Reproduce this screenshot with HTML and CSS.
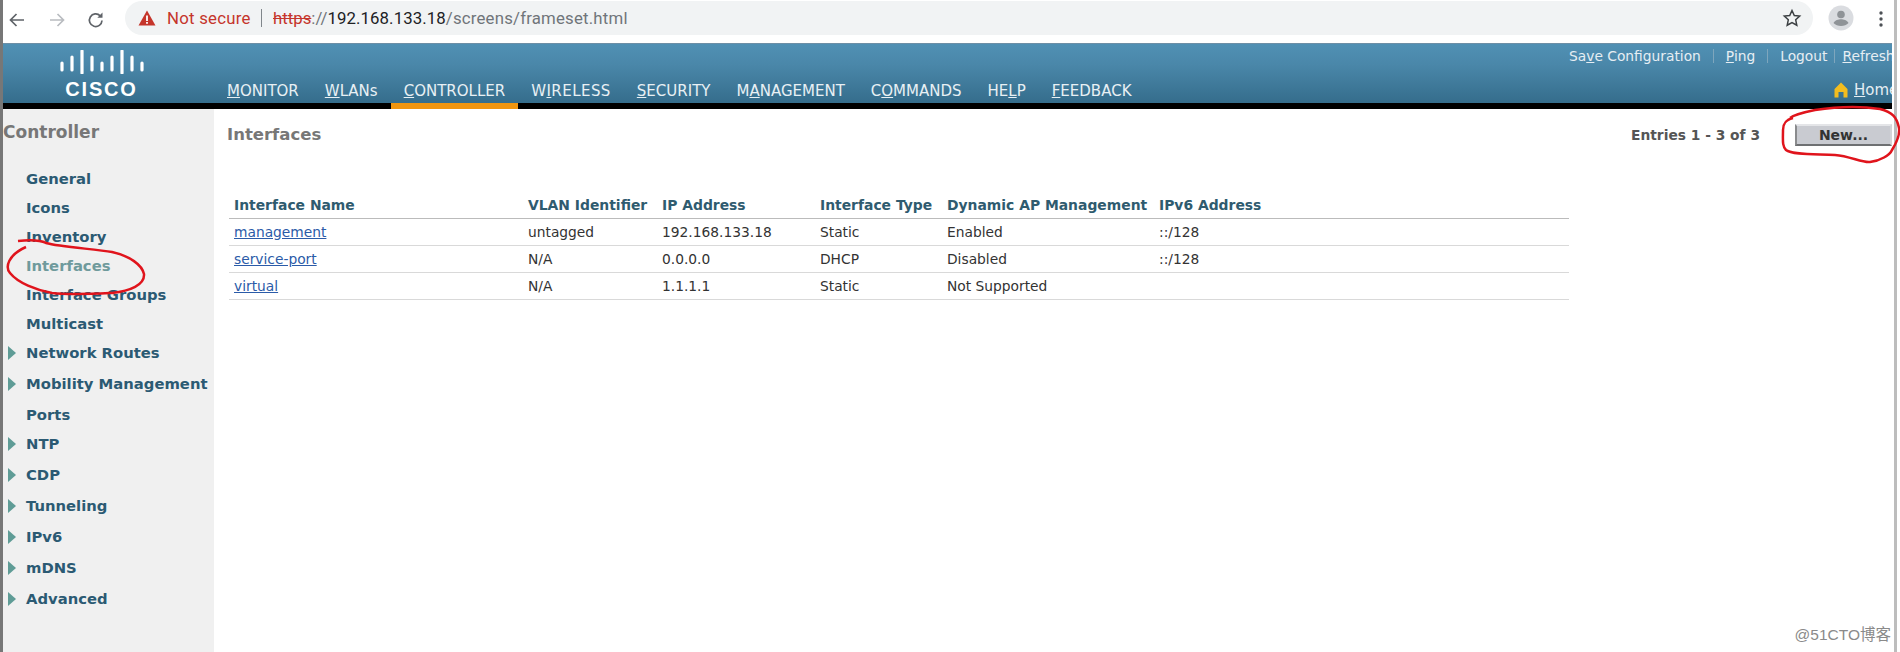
FILE: index.html
```html
<!DOCTYPE html>
<html lang="en">
<head>
<meta charset="utf-8">
<title>Interfaces</title>
<link rel="stylesheet" href="styles.css">
</head>
<body>
<div class="shell">
  <div class="chrome">
    <svg class="tool" width="20" height="20" viewBox="0 0 20 20"><path d="M17 10H3.500M9.500 4l-6 6 6 6" fill="none" stroke="#5f6368" stroke-width="1.700"/></svg>
    <svg class="tool" width="20" height="20" viewBox="0 0 20 20"><path d="M3 10h13.500M10.500 4l6 6-6 6" fill="none" stroke="#b9bcc0" stroke-width="1.700"/></svg>
    <svg class="tool" width="20" height="20" viewBox="0 0 20 20"><path d="M16 10.500a6.300 6.300 0 1 1-1.800-4.700" fill="none" stroke="#5f6368" stroke-width="1.700"/><path d="M16.500 2.500v5.200h-5.200z" fill="#5f6368"/></svg>
    <div class="omnibox">
      <svg class="warn" width="18" height="16" viewBox="0 0 18 16"><path d="M9 0.500 17.500 15.500H0.500z" fill="#c5352b"/><path d="M8.100 5.500h1.800v5.500H8.100zM8.100 12h1.800v1.800H8.100z" fill="#fff"/></svg>
      <span class="insecure">Not secure</span>
      <span class="sep"></span>
      <span class="url"><span class="scheme">https</span><span class="dim">://</span><span class="host">192.168.133.18</span><span class="dim path">/screens/frameset.html</span></span>
      <svg class="star" width="20" height="20" viewBox="0 0 20 20"><path d="M10 2.500l2.300 5 5.400.6-4 3.700 1.100 5.400-4.800-2.700-4.800 2.700 1.100-5.400-4-3.700 5.400-.6z" fill="none" stroke="#3c4043" stroke-width="1.500"/></svg>
    </div>
    <svg class="avatar" width="26" height="26" viewBox="0 0 26 26"><circle cx="13" cy="13" r="12.500" fill="#dadce0"/><circle cx="13" cy="9.500" r="3.800" fill="#8f9397"/><path d="M5.500 18c1.500-3 5-3.800 7.500-3.800s6 .8 7.500 3.800c-1.800 2-4.500 3-7.500 3s-5.700-1-7.500-3z" fill="#8f9397"/></svg>
    <svg class="dots" width="6" height="18" viewBox="0 0 6 18"><circle cx="3" cy="3" r="1.700" fill="#4d5156"/><circle cx="3" cy="9" r="1.700" fill="#4d5156"/><circle cx="3" cy="15" r="1.700" fill="#4d5156"/></svg>
  </div>

  <header class="top">
    <div class="brand">
      <svg class="bars" width="84" height="24" viewBox="0 0 84 24"><path d="M2 13v7M12 7v13M22 1v22M32 7v13M42 13v7M52 7v13M62 1v22M72 7v13M82 13v7" stroke="#fff" stroke-width="3.200" stroke-linecap="round" fill="none"/></svg>
      <span class="wordmark">CISCO</span>
    </div>
    <nav class="menu">
      <a class="tab"><u>M</u>ONITOR</a>
      <a class="tab"><u>W</u>LANs</a>
      <a class="tab tab-on"><u>C</u>ONTROLLER</a>
      <a class="tab tab-wide">W<u>I</u>RELESS</a>
      <a class="tab"><u>S</u>ECURITY</a>
      <a class="tab">M<u>A</u>NAGEMENT</a>
      <a class="tab">C<u>O</u>MMANDS</a>
      <a class="tab">HE<u>L</u>P</a>
      <a class="tab"><u>F</u>EEDBACK</a>
    </nav>
    <div class="util">
      <div class="util-row">
        <span>Sa<u>v</u>e Configuration</span><i class="pipe"></i>
        <span><u>P</u>ing</span><i class="pipe"></i>
        <span>Logout</span><i class="pipe pipe-tight"></i>
        <span><u>R</u>efresh</span>
      </div>
      <div class="home-row">
        <svg width="14" height="16" viewBox="0 0 14 16"><path d="M7 0.500 13.500 7V15.500H9.500V10H4.500V15.500H0.500V7z" fill="#f3bd1f"/></svg>
        <span><u>H</u>ome</span>
      </div>
    </div>
  </header>

  <div class="body">
    <aside class="side">
      <h2 class="side-title">Controller</h2>
      <ul class="side-list">
        <li class="side-item">General</li>
        <li class="side-item">Icons</li>
        <li class="side-item">Inventory</li>
        <li class="side-item side-current">Interfaces</li>
        <li class="side-item">Interface Groups</li>
        <li class="side-item">Multicast</li>
        <li class="side-item side-more side-tall">Network Routes</li>
        <li class="side-item side-more side-tall">Mobility Management</li>
        <li class="side-item">Ports</li>
        <li class="side-item side-more side-tall">NTP</li>
        <li class="side-item side-more side-tall">CDP</li>
        <li class="side-item side-more side-tall">Tunneling</li>
        <li class="side-item side-more side-tall">IPv6</li>
        <li class="side-item side-more side-tall">mDNS</li>
        <li class="side-item side-more side-tall">Advanced</li>
      </ul>
    </aside>
    <main class="main">
      <div class="main-head">
        <h1 class="main-title">Interfaces</h1>
        <span class="entries">Entries 1 - 3 of 3</span>
        <button class="new-btn">New...</button>
      </div>
      <table class="grid">
        <colgroup>
          <col class="c1"><col class="c2"><col class="c3"><col class="c4"><col class="c5"><col class="c6">
        </colgroup>
        <thead>
          <tr><th>Interface Name</th><th>VLAN Identifier</th><th>IP Address</th><th>Interface Type</th><th>Dynamic AP Management</th><th>IPv6 Address</th></tr>
        </thead>
        <tbody>
          <tr><td><a class="link">management</a></td><td>untagged</td><td>192.168.133.18</td><td>Static</td><td>Enabled</td><td>::/128</td></tr>
          <tr><td><a class="link">service-port</a></td><td>N/A</td><td>0.0.0.0</td><td>DHCP</td><td>Disabled</td><td>::/128</td></tr>
          <tr><td><a class="link">virtual</a></td><td>N/A</td><td>1.1.1.1</td><td>Static</td><td>Not Supported</td><td></td></tr>
        </tbody>
      </table>
    </main>
  </div>

  <div class="watermark">@51CTO博客</div>
  <svg class="ink" width="1900" height="652" viewBox="0 0 1900 652">
    <path d="M18 241C28 240 40 240 46 243C60 247 95 249 112 252C130 256 142 265 144 274C145 285 130 291 112 293C90 294 70 295 52 293C36 290 18 283 10 273C5 267 8 255 26 247" />
    <path d="M1793 118C1785 120 1783 124 1783 130C1783 140 1782 146 1786 150C1792 155 1815 154 1835 155C1850 156 1862 163 1870 162C1880 161 1890 155 1892 150C1897 142 1900 135 1899 128C1897 118 1893 112 1880 109C1860 106 1835 107 1815 110C1805 112 1795 114 1790 118" />
  </svg>
</div>
</body>
</html>
```

FILE: styles.css
```css
* { box-sizing: border-box; }
html, body { margin: 0; padding: 0; background: #fff; }
body { width: 1900px; height: 652px; overflow: hidden; font-family: "DejaVu Sans", sans-serif; }
u { text-decoration: underline; }
ul { list-style: none; margin: 0; padding: 0; }

.shell {
  position: relative;
  width: 1897px;
  height: 652px;
  padding-right: 2px;
  border-left: 3px solid #777;
  border-right: 3px solid #bdbdbd;
  display: flex;
  flex-direction: column;
}

.chrome { height: 43px; flex: none; display: flex; align-items: flex-start; background: #fff; position: relative; }
.tool { margin-top: 10px; flex: none; }
.tool:nth-child(1) { margin-left: 4px; }
.tool:nth-child(2) { margin-left: 20px; }
.tool:nth-child(3) { margin-left: 19px; }
.omnibox {
  margin: 1px 0 0 19px;
  width: 1688px;
  height: 34px;
  flex: none;
  border-radius: 17px;
  background: #f1f3f4;
  display: flex;
  align-items: center;
  padding-left: 13px;
  font: 16.800px "Roboto", sans-serif;
  white-space: nowrap;
}
.warn { flex: none; }
.insecure { color: #c5352b; margin-left: 11px; width: 83px; letter-spacing: .25px; }
.sep { width: 1px; height: 18px; background: #80868b; margin: 0 11px 0 11px; }
.url { color: #70757a; flex: 1; }
.scheme { color: #c5352b; text-decoration: line-through; }
.host { color: #202124; letter-spacing: .1px; }
.path { letter-spacing: .2px; }
.star { flex: none; margin-right: 11px; }
.avatar { flex: none; margin: 5px 0 0 15px; }
.dots { flex: none; margin: 10px 0 0 24px; }

.top {
  height: 66px;
  flex: none;
  display: flex;
  border-bottom: 6px solid #000;
  border-top: 1px solid #6d8fa6;
  background: linear-gradient(#5090b4 0%, #4a87a9 35%, #356d8c 100%);
  color: #fff;
}
.brand { width: 197px; flex: none; display: flex; flex-direction: column; align-items: center; padding-top: 6px; }
.bars { display: block; }
.wordmark { font: bold 20px/20px "Liberation Sans", sans-serif; letter-spacing: 1.800px; margin-top: 5px; }
.menu { flex: none; width: 1369px; padding-left: 27px; display: flex; align-items: flex-end; }
.tab {
  height: 65px;
  margin-bottom: -6px;
  padding: 38px 13px 0;
  border-bottom: 6px solid transparent;
  font-size: 15px;
  line-height: 18px;
  white-space: nowrap;
  color: #e8f0f4;
}
.tab:first-child { padding-left: 0; }
.tab-on { border-bottom-color: #f0950f; }
.tab-wide { letter-spacing: .45px; }

.util { flex: 1; min-width: 0; overflow: hidden; font-size: 13.800px; color: #e6eef3; white-space: nowrap; }
.util-row { display: flex; align-items: center; height: 17px; margin-top: 3px; }
.pipe { width: 1px; height: 14px; background: #7ea6bd; margin: 0 12px; flex: none; }
.pipe-tight { margin: 0 7px 0 7px; }
.home-row { display: flex; align-items: center; gap: 6px; margin: 17px 0 0 265px; font-size: 15px; }
.home-row svg { flex: none; }

.body { flex: 1; display: flex; min-height: 0; }
.side { width: 211px; flex: none; background: #f0f0f0; }
.side-title { margin: 0; height: 59px; padding-top: 11px; font-size: 17px; line-height: 24px; font-weight: bold; color: #777; }
.side-item {
  position: relative;
  height: 29px;
  padding-left: 23px;
  font-size: 14.800px;
  font-weight: bold;
  line-height: 22px;
  color: #2b5a73;
  white-space: nowrap;
}
.side-tall { height: 31px; }
.side-current { color: #6f9a9c; }
.side-more::before {
  content: "";
  position: absolute;
  left: 5px;
  top: 4px;
  border-left: 8px solid #5f9c96;
  border-top: 7px solid transparent;
  border-bottom: 7px solid transparent;
}

.main { flex: 1; min-width: 0; padding-left: 13px; }
.main-head { height: 58px; display: flex; align-items: flex-start; }
.main-title { margin: 0; padding-top: 14px; font-size: 16.500px; line-height: 24px; font-weight: bold; color: #777; flex: 1; }
.entries { margin-top: 16px; font-size: 13.800px; line-height: 20px; font-weight: bold; color: #555; }
.new-btn {
  margin: 15px 0 0 35px;
  width: 97px;
  height: 22px;
  padding: 0;
  font: bold 14px "DejaVu Sans", sans-serif;
  color: #333;
  background: #c9cbd1;
  border: 2px solid;
  border-color: #e4e5e8 #d4d5d8 #6e7072 #8a8b8d;
}

.grid { width: 1340px; margin-left: 2px; margin-top: 25px; border-collapse: collapse; table-layout: fixed; font-size: 13.800px; }
.c1 { width: 294px; } .c2 { width: 134px; } .c3 { width: 158px; } .c4 { width: 127px; } .c5 { width: 212px; }
.grid th { height: 26px; padding: 1px 5px 0; text-align: left; font-weight: bold; font-size: 13.900px; color: #2f5b6f; border-bottom: 1px solid #bbb; white-space: nowrap; }
.grid td { height: 27px; padding: 0 5px; color: #333; border-bottom: 1px solid #d9d9d9; white-space: nowrap; }
.link { color: #2b5ba8; text-decoration: underline; }

.watermark { position: absolute; right: 3px; top: 622px; font: 15.500px "Liberation Sans", "Noto Sans CJK SC", sans-serif; color: #8a8a8a; }
.ink { position: absolute; left: -3px; top: 0; pointer-events: none; }
.ink path { fill: none; stroke: #e0141c; stroke-width: 2.500; }
```
